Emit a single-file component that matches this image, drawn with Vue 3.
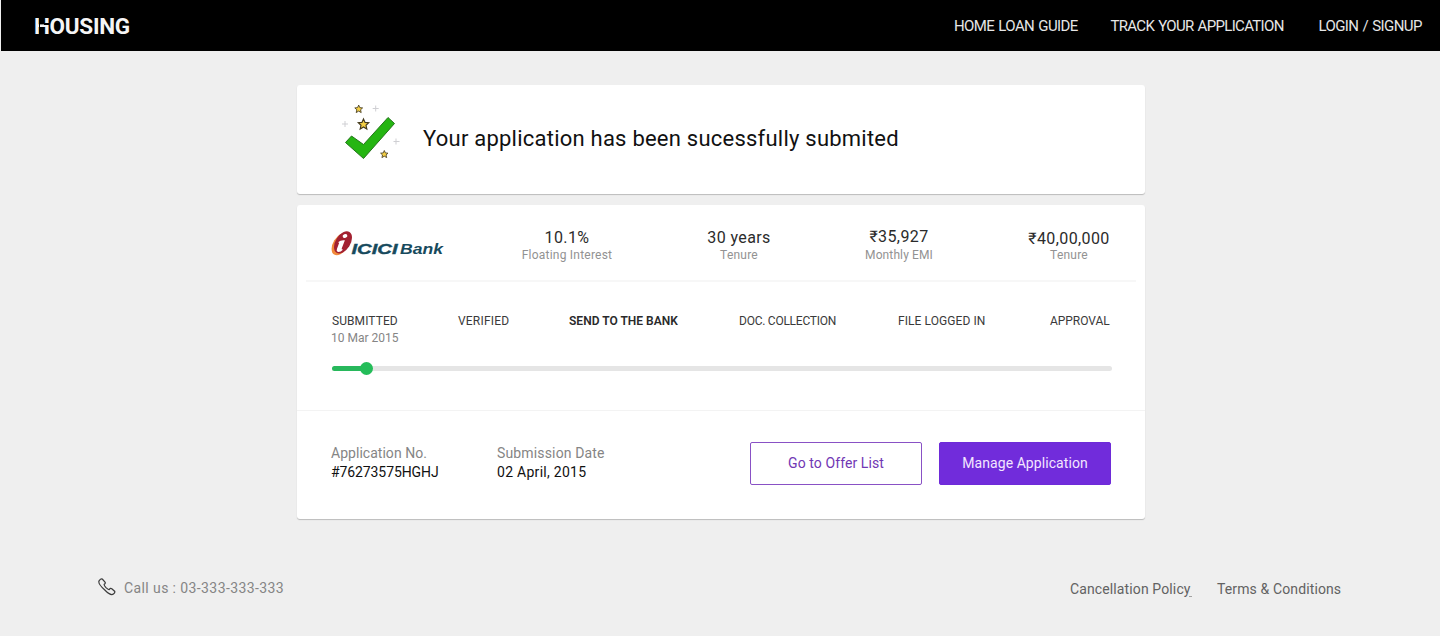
<script setup>
const nav = [
  { text: 'HOME LOAN GUIDE', cls: 'nav-guide' },
  { text: 'TRACK YOUR APPLICATION', cls: 'nav-track' },
  { text: 'LOGIN / SIGNUP', cls: 'nav-login' },
]
const stats = [
  { value: '10.1%', label: 'Floating Interest', cls: 'interest' },
  { value: '30 years', label: 'Tenure', cls: 'years' },
  { value: '₹35,927', label: 'Monthly EMI', cls: 'emi' },
  { value: '₹40,00,000', label: 'Tenure', cls: 'amount' },
]
const steps = [
  { name: 'SUBMITTED', date: '10 Mar 2015', cls: 's1' },
  { name: 'VERIFIED', cls: 's2' },
  { name: 'SEND TO THE BANK', cls: 's3' },
  { name: 'DOC. COLLECTION', cls: 's4' },
  { name: 'FILE LOGGED IN', cls: 's5' },
  { name: 'APPROVAL', cls: 's6' },
]
const star = 'M0 -5 L1.5 -1.7 L5 -1.4 L2.4 1 L3.2 4.6 L0 2.7 L-3.2 4.6 L-2.4 1 L-5 -1.4 L-1.5 -1.7 Z'
</script>

<template>
  <div class="page">
    <header class="topbar">
      <div class="brand">HOUSING</div>
      <nav class="nav">
        <a v-for="n in nav" :key="n.text" :class="n.cls">{{ n.text }}</a>
      </nav>
    </header>

    <main class="main">
      <section class="card notice">
        <svg class="tick" width="64" height="64" viewBox="338 100 64 64">
          <path d="M345.5 142.5 L351.5 136 L363.5 144.5 L388 117.5 L394.5 123.5 L363.5 158.5 Z" fill="#25b512" stroke="#23751b" stroke-width="1" />
          <g fill="#f4cf45" stroke="#43391d" stroke-width="1.1">
            <path :d="star" transform="translate(358.7 109) scale(.78)" />
            <path :d="star" transform="translate(363.5 124.2) scale(1.04)" />
            <path :d="star" transform="translate(384.3 154.2) scale(.74)" />
          </g>
          <path d="M375.7 105.5v6 M372.7 108.5h6 M345 121v6 M342 124h6 M396 138.5v6 M393.5 141.5h6" stroke="#cfcfd3" stroke-width="1" fill="none" />
        </svg>
        <h1>Your application has been sucessfully submited</h1>
      </section>

      <section class="card details">
        <div class="stats">
          <svg class="bank" width="184" height="44" viewBox="297 221 184 44">
            <ellipse cx="340.6" cy="244.2" rx="7.4" ry="12.2" transform="rotate(32 340.6 244.2)" fill="#f18a3b" />
            <ellipse cx="343" cy="242.4" rx="7.4" ry="12.2" transform="rotate(32 343 242.4)" fill="#a32131" />
            <ellipse cx="345" cy="236" rx="2.4" ry="1.9" transform="rotate(-20 345 236)" fill="#fff" />
            <path d="M338 242.3 Q341 239.6 344.9 240.3 L341.8 248.3 Q341.2 250 343.2 249.4 Q340 252.6 337.6 251.8 Q336.1 251 337 248.7 L339.2 242.8 Z" fill="#fff" />
            <text x="351.5" y="254.3" textLength="46" lengthAdjust="spacingAndGlyphs" class="bank-strong">ICICI</text>
            <text x="400" y="254.3" textLength="43" lengthAdjust="spacingAndGlyphs" class="bank-name">Bank</text>
          </svg>
          <div v-for="s in stats" :key="s.value" class="stat" :class="s.cls">
            <strong>{{ s.value }}</strong>
            <span>{{ s.label }}</span>
          </div>
        </div>

        <div class="progress">
          <div class="steps">
            <div v-for="s in steps" :key="s.name" class="step" :class="s.cls">
              <div class="step-name">{{ s.name }}</div>
              <div v-if="s.date" class="step-date">{{ s.date }}</div>
            </div>
          </div>
          <div class="track"><div class="done"></div><i class="dot"></i></div>
        </div>

        <div class="summary">
          <dl class="app-no">
            <dt>Application No.</dt>
            <dd>#76273575HGHJ</dd>
          </dl>
          <dl class="sub-date">
            <dt>Submission Date</dt>
            <dd>02 April, 2015</dd>
          </dl>
          <button class="btn outline">Go to Offer List</button>
          <button class="btn solid">Manage Application</button>
        </div>
      </section>
    </main>

    <footer class="footer">
      <svg class="phone" width="18" height="18" viewBox="0 0 18 18">
        <path d="M1.2 2.6 Q3 .3 4.3 1.1 L7 4.1 Q7.8 5.2 6.2 6.3 Q5.8 7.3 8 9.6 Q10.4 12 11.4 11.4 Q12.4 9.8 13.8 10.7 L16.6 13.2 Q17.4 14.4 15.4 16 Q12.8 18.2 6.8 12 Q-.7 5.3 1.2 2.6 Z" fill="none" stroke="#3c3c3c" stroke-width="1.25" />
      </svg>
      <span class="call">Call us : 03-333-333-333</span>
      <a class="policy">Cancellation Policy</a>
      <a class="terms">Terms &amp; Conditions</a>
    </footer>
  </div>
</template>

<style>
body { background: #efefef; }
</style>

<style scoped>
.page {
  height: 636px;
  background: #efefef;
  font-family: Roboto, "Liberation Sans", sans-serif;
  color: #222;
  display: flex;
  flex-direction: column;
  overflow: hidden;
}
.topbar {
  height: 51px;
  flex: none;
  margin-left: 1px;
  box-sizing: border-box;
  padding: 2px 18px 0 33px;
  background: #000;
  display: flex;
  align-items: center;
  justify-content: space-between;
}
.brand {
  position: relative;
  font-size: 22.5px;
  font-weight: 700;
  line-height: 49px;
  letter-spacing: -.3px;
  color: #f5f5f5;
}
.brand::before, .brand::after { content: ""; position: absolute; background: #000; }
.brand::before { left: 5px; top: 16px; width: 1px; height: 18px; }
.brand::after { left: 10px; top: 21px; width: 5px; height: 2px; }
.nav { display: flex; font-size: 15px; line-height: 49px; color: #e6e6e6; white-space: nowrap; }
.nav-guide { width: 156.5px; letter-spacing: -.6px; word-spacing: 1px; }
.nav-track { width: 208px; letter-spacing: -.68px; word-spacing: 1px; }
.nav-login { width: 103.5px; letter-spacing: -.6px; word-spacing: 1px; }

.main { width: 848px; margin: 34px 0 0 297px; flex: none; }
.card { background: #fff; border-radius: 3px; box-shadow: 0 1px 1px rgba(0, 0, 0, .22); }
.notice { height: 109px; display: flex; }
.tick { margin: 15px 0 0 41px; flex: none; }
h1 {
  margin: 41px 0 0 21px;
  font-size: 22px;
  font-weight: 400;
  line-height: 26px;
  letter-spacing: .23px;
  color: #111;
  white-space: nowrap;
}
.details { margin-top: 11px; height: 314px; }
.stats {
  height: 75px;
  display: grid;
  grid-template-columns: 184px 172px 172px 148px 172px;
  position: relative;
}
.stats::after { content: ""; position: absolute; left: 9px; right: 9px; bottom: -2px; height: 2px; background: #f7f7f7; }
.bank { margin-top: 16px; }
.bank text { font-family: "Liberation Sans", Arial, sans-serif; font-style: italic; font-weight: 700; fill: #174a5d; }
.bank-strong { font-size: 15.5px; stroke: #174a5d; stroke-width: .4px; }
.bank-name { font-size: 15px; }
.stat { padding-top: 23px; display: flex; flex-direction: column; align-items: center; white-space: nowrap; }
.stat strong { font-size: 16px; font-weight: 400; line-height: 20px; letter-spacing: .4px; color: #2b2b2b; }
.stat span { font-size: 12px; line-height: 14px; letter-spacing: .22px; color: #929292; }
.emi { padding-top: 22px; }
.emi span { margin-top: 1px; letter-spacing: .12px; }
.amount { padding: 24px 0 0 20px; }
.amount span { margin-top: -1px; }

.progress { height: 131px; box-sizing: border-box; padding: 33px 0 0 34px; border-bottom: 1px solid #f3f3f3; }
.steps { height: 53px; display: grid; grid-template-columns: 127px 111px 170px 159px 152px 95px; white-space: nowrap; }
.step { font-size: 12px; line-height: 17px; color: #3a3a3a; }
.step-date { letter-spacing: 0; color: #858585; }
.s1 .step-name { padding-left: 1px; letter-spacing: .08px; }
.s2 { letter-spacing: .2px; }
.s3 { font-weight: 600; letter-spacing: .02px; color: #2a2a2a; }
.s4 { letter-spacing: -.25px; }
.s5 { letter-spacing: .08px; }
.s6 { letter-spacing: -.05px; }
.track { position: relative; width: 780px; height: 5px; margin-left: 1px; border-radius: 3px; background: #e5e5e5; }
.done { width: 34px; height: 5px; border-radius: 3px; background: #28b85c; }
.dot { position: absolute; left: 27.5px; top: -4.5px; width: 13.5px; height: 13.5px; border-radius: 50%; background: #24bd59; }

.summary { display: flex; padding: 31px 34px 0; white-space: nowrap; }
dl { margin: 2px 0 0; font-size: 14px; line-height: 19px; }
dt { color: #858585; }
dd { margin: 0; color: #111; }
.app-no { width: 166px; letter-spacing: .03px; }
.app-no dd { letter-spacing: -.1px; }
.sub-date { width: 253px; letter-spacing: .15px; }
.sub-date dd { letter-spacing: .28px; }
.btn {
  box-sizing: border-box;
  width: 172px;
  height: 43px;
  padding: 0 0 1px;
  border-radius: 2px;
  font: 14px/40px Roboto, "Liberation Sans", sans-serif;
}
.outline { border: 1px solid #8951c5; background: #fff; color: #7137b4; letter-spacing: .08px; }
.solid { margin-left: 17px; border: 1px solid #6e2bd8; background: #712cdb; color: #f3e6ff; letter-spacing: .07px; }

.footer { display: flex; margin-top: 58px; padding-left: 98px; font-size: 14px; line-height: 22px; white-space: nowrap; }
.phone { margin-top: 1px; flex: none; }
.call { width: 954px; margin-left: 8px; letter-spacing: .4px; color: #858585; }
.policy, .terms { padding-top: 1px; color: #626262; letter-spacing: .12px; }
.policy { position: relative; width: 147px; margin-left: -8px; }
.policy::after { content: ""; position: absolute; left: 119px; top: 19px; width: 3px; height: 1px; background: #a2a2a2; }
</style>
